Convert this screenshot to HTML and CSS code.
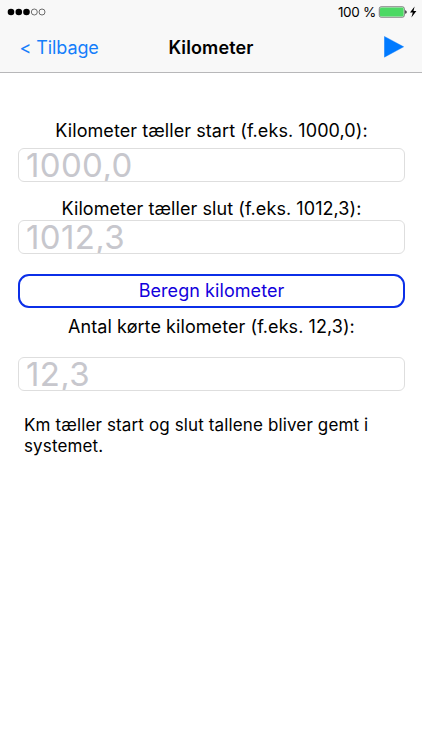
FILE: index.html
```html
<!DOCTYPE html>
<html lang="da">
<head>
<meta charset="utf-8">
<title>Kilometer</title>
<link rel="stylesheet" href="styles.css">
</head>
<body>
<header class="top">
  <div class="status">
    <svg class="signal" width="40" height="8" viewBox="0 0 40 8">
      <circle cx="4" cy="4" r="3.3"/><circle cx="11.8" cy="4" r="3.3"/><circle cx="19.5" cy="4" r="3.3"/>
      <g fill="none" stroke="#333" stroke-width=".7"><circle cx="27.3" cy="4" r="3"/><circle cx="35" cy="4" r="3"/></g>
    </svg>
    <div class="power">
      <span class="percent">100 %</span>
      <svg width="40" height="14" viewBox="0 0 40 14">
        <rect x="1.3" y="1.8" width="25" height="10.4" rx="1.8" fill="#fff" stroke="#555" stroke-width=".8"/>
        <rect x="2" y="2.5" width="23.6" height="9" rx="1.2" fill="#4cd964"/>
        <path d="M27.3 5.2c1.7.3 1.7 3.3 0 3.6z"/>
        <path d="M36.6 1.6 32 7.6h2.8l-1.4 4.9 5-6.6h-2.9z"/>
      </svg>
    </div>
  </div>
  <nav class="nav">
    <a class="back">&lt; Tilbage</a>
    <h1 class="title">Kilometer</h1>
    <svg class="play" width="20" height="22" viewBox="0 0 20 22"><path d="M.4.4v20.8L19.7 10.8z" fill="#007aff" stroke="#007aff" stroke-width=".4"/></svg>
  </nav>
</header>
<main class="form">
  <label class="label start" for="start">Kilometer tæller start (f.eks. 1000,0):</label>
  <input class="field" id="start" placeholder="1000,0">
  <label class="label end" for="end">Kilometer tæller slut (f.eks. 1012,3):</label>
  <input class="field" id="end" placeholder="1012,3">
  <button class="calc">Beregn kilometer</button>
  <label class="label total" for="total">Antal kørte kilometer (f.eks. 12,3):</label>
  <input class="field" id="total" placeholder="12,3">
  <p class="note">Km tæller start og slut tallene bliver gemt i systemet.</p>
</main>
</body>
</html>
```
FILE: styles.css
```css
* { box-sizing: border-box; }
body {
  margin: 0;
  min-height: 750px;
  background: #fff;
  color: #000;
  font: 18px/22px Inter, "Liberation Sans", sans-serif;
  letter-spacing: 0.07px;
}
.top {
  height: 73px;
  background: #f8f8f8;
  border-bottom: 1px solid #b7b7b9;
}
.status {
  display: flex;
  justify-content: space-between;
  align-items: center;
  height: 24px;
  padding: 0 4px 0 7px;
}
.power { display: flex; align-items: center; gap: 2px; }
.percent { font-size: 13.5px; letter-spacing: -0.3px; }
.nav {
  display: grid;
  grid-template-columns: 1fr auto 1fr;
  align-items: center;
  height: 46px;
  padding: 0 18px 0 19.5px;
}
.back { padding-top: 2px; color: #147efb; letter-spacing: -0.1px; }
.title { margin: 0 1.5px 0 0; padding-top: 2px; font-size: 18px; font-weight: 600; letter-spacing: 0.13px; }
.play { justify-self: end; }
.form {
  display: flex;
  flex-direction: column;
  padding: 47px 17px 0 18px;
}
.label { text-align: center; }
.field {
  height: 34px;
  margin: 0;
  padding: 0 7px;
  border: 1px solid #dedede;
  border-radius: 6px;
  background: #fff;
  font: 33px/32px Inter, "Liberation Sans", sans-serif;
  letter-spacing: 0.35px;
}
.field::placeholder { color: #c7c7cd; opacity: 1; }
.start { margin-bottom: 6.4px; }
.end { margin-top: 15.6px; }
.calc {
  height: 34px;
  margin: 20px 0 8px;
  padding: 1px 0 0;
  border: 2px solid #0b2fe8;
  border-radius: 11px;
  background: #fff;
  color: #1200dc;
  font: inherit;
  letter-spacing: inherit;
}
.total { margin-bottom: 19px; }
.note { margin: 24px 6px 0; font-size: 17px; line-height: 21.5px; letter-spacing: 0.13px; }
```
